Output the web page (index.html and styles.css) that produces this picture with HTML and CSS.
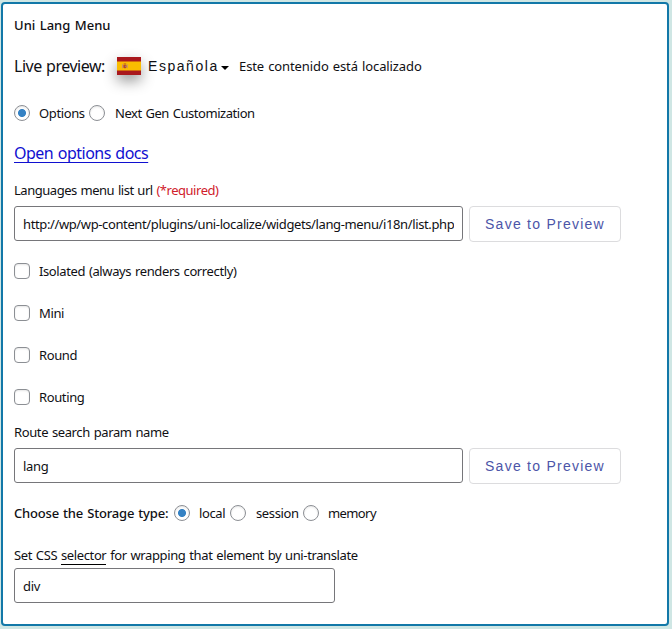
FILE: index.html
```html
<!DOCTYPE html>
<html lang="en">
<head>
<meta charset="utf-8">
<title>Uni Lang Menu</title>
<link rel="stylesheet" href="styles.css">
</head>
<body>
<main class="card">
  <h1 class="title">Uni Lang Menu</h1>
  <div class="preview">
    <span class="preview-label">Live preview:</span>
    <svg class="flag" viewBox="0 0 24 18" width="24" height="18">
      <rect width="24" height="18" fill="#a9181d"/>
      <rect y="4.5" width="24" height="9" fill="#fabd00"/>
      <path d="M5 7.2h1v4H5zM9.8 7.2h1v4h-1z" fill="#c9906a"/>
      <path d="M6.4 8h3v2.4q-1.5 1.8-3 0z" fill="#b5432b"/>
      <path d="M6.6 6.4h2.6v1.2H6.6z" fill="#bd5a25"/>
      <circle cx="8.6" cy="9.4" r=".8" fill="#9b7380"/>
    </svg>
    <span class="lang">Española</span>
    <span class="caret"></span>
    <span class="localized">Este contenido está localizado</span>
  </div>
  <div class="row modes">
    <label class="choice"><input type="radio" name="mode" checked><span class="t-options">Options</span></label>
    <label class="choice"><input type="radio" name="mode"><span class="t-next">Next Gen Customization</span></label>
  </div>
  <div class="docs"><a href="#">Open options docs</a></div>
  <div class="label label-url"><span>Languages menu list url <em>(*required)</em></span></div>
  <div class="field">
    <input class="text url" type="text" value="http://wp/wp-content/plugins/uni-localize/widgets/lang-menu/i18n/list.php">
    <button>Save to Preview</button>
  </div>
  <div class="checks">
    <label class="choice row"><input type="checkbox"><span>Isolated (always renders correctly)</span></label>
    <label class="choice row"><input type="checkbox"><span>Mini</span></label>
    <label class="choice row"><input type="checkbox"><span>Round</span></label>
    <label class="choice row"><input type="checkbox"><span>Routing</span></label>
  </div>
  <div class="label label-route"><span>Route search param name</span></div>
  <div class="field">
    <input class="text" type="text" value="lang">
    <button>Save to Preview</button>
  </div>
  <div class="row storage">
    <strong>Choose the Storage type:</strong>
    <label class="choice"><input type="radio" name="storage" checked><span class="t-local">local</span></label>
    <label class="choice"><input type="radio" name="storage"><span class="t-session">session</span></label>
    <label class="choice"><input type="radio" name="storage"><span class="t-memory">memory</span></label>
  </div>
  <div class="label label-css"><span>Set CSS <u>selector</u> for wrapping that element by uni-translate</span></div>
  <input class="text short" type="text" value="div">
</main>
</body>
</html>
```
FILE: styles.css
```css
* { box-sizing: border-box; }

body {
  margin: 0;
  padding: 2px 3px 3px 1px;
  height: 629px;
  overflow: hidden;
  background: #cfe6e4;
  color: #101014;
  font: 13px/18px "Noto Sans", "Open Sans", sans-serif;
  letter-spacing: -0.38px;
  word-spacing: 0.8px;
}

.card {
  height: 624px;
  padding: 0 11px;
  border: 2px solid #1278a8;
  border-radius: 4px;
  background: #fff;
}

.title {
  display: flex;
  align-items: center;
  height: 42px;
  margin: 0;
  font-size: 13px;
  font-weight: 500;
  letter-spacing: 0.05px;
}

.preview { display: flex; align-items: center; height: 40px; white-space: nowrap; }
.preview-label { width: 103px; font-size: 16px; letter-spacing: -0.5px; }
.flag { filter: drop-shadow(0 6px 7px rgba(0, 0, 0, .4)); }
.lang {
  width: 72px;
  margin-left: 7px;
  font: 14px/18px "Liberation Sans", sans-serif;
  letter-spacing: 1.55px;
}
.caret {
  margin: 3px 10px 0 1px;
  border: 4px solid transparent;
  border-top-color: #000;
  border-bottom: 0;
}
.localized { letter-spacing: -0.1px; }

.row { display: flex; align-items: center; height: 42px; white-space: nowrap; }
.modes { height: 54px; }
.choice { display: flex; align-items: center; }
.t-options { width: 50px; }
.t-next { margin-left: 1px; letter-spacing: -0.45px; }
.t-local { width: 31px; }
.t-session { width: 47px; margin-left: 1px; }
.t-memory { letter-spacing: -0.6px; }

input[type="radio"],
input[type="checkbox"] {
  appearance: none;
  flex: none;
  width: 16px;
  height: 16px;
  margin: 0 9px 0 0;
  border: 1px solid #8c8f94;
  border-radius: 4px;
  background: #fff;
  box-shadow: inset 0 1px 2px rgba(0, 0, 0, .1);
}
input[type="radio"] { border-radius: 50%; }
input[type="radio"]:checked {
  background: radial-gradient(circle, #3582c4 3.6px, #fff 4.4px);
}

.docs {
  height: 34px;
  padding-top: 3px;
  font-size: 16px;
  line-height: 20px;
  letter-spacing: -0.5px;
}
.docs a {
  color: #1010d0;
  text-decoration-thickness: 1px;
  text-underline-offset: 3px;
  text-decoration-skip-ink: none;
}

.label { display: flex; align-items: center; white-space: nowrap; }
.label-url { height: 32px; letter-spacing: -0.47px; }
.label-route { height: 28px; margin-bottom: 2px; }
.label-css { height: 26px; letter-spacing: -0.38px; }
.label em { color: #d0202c; font-style: normal; }
.label u { text-decoration: none; border-bottom: 1px solid #000; }

.field { display: flex; align-items: flex-start; gap: 6px; height: 36px; }
.text {
  width: 449px;
  height: 35px;
  padding: 0 8px;
  border: 1px solid #76767a;
  border-radius: 3px;
  background: #fff;
  color: #101014;
  font: inherit;
  letter-spacing: -0.3px;
}
.short { display: block; width: 321px; }

.url { letter-spacing: -0.38px; }

button {
  width: 152px;
  height: 36px;
  padding: 0;
  border: 1px solid #dcdcde;
  border-radius: 4px;
  background: #fff;
  color: #4c55a8;
  font: 14px/20px "Liberation Sans", sans-serif;
  letter-spacing: 1.25px;
}

.checks { margin-top: 8px; }
.storage { height: 58px; }
.storage strong { width: 160px; font-weight: 500; letter-spacing: -0.17px; }
```
